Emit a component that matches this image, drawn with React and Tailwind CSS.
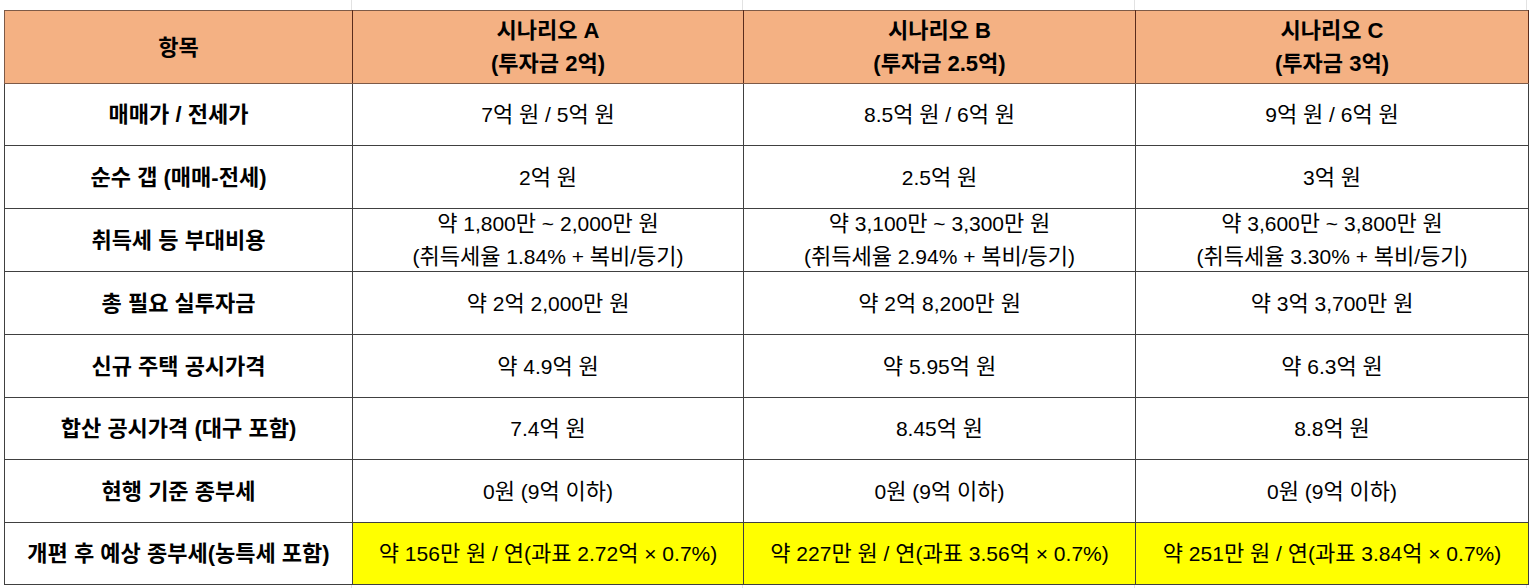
const rows = [
  { label: '매매가 / 전세가', a: ['7억 원 / 5억 원'], b: ['8.5억 원 / 6억 원'], c: ['9억 원 / 6억 원'], h: 'h-[61px]' },
  { label: '순수 갭 (매매-전세)', a: ['2억 원'], b: ['2.5억 원'], c: ['3억 원'], h: 'h-[62px]' },
  {
    label: '취득세 등 부대비용',
    a: ['약 1,800만 ~ 2,000만 원', '(취득세율 1.84% + 복비/등기)'],
    b: ['약 3,100만 ~ 3,300만 원', '(취득세율 2.94% + 복비/등기)'],
    c: ['약 3,600만 ~ 3,800만 원', '(취득세율 3.30% + 복비/등기)'],
    h: 'h-[62px]',
  },
  { label: '총 필요 실투자금', a: ['약 2억 2,000만 원'], b: ['약 2억 8,200만 원'], c: ['약 3억 3,700만 원'], h: 'h-[62px]' },
  { label: '신규 주택 공시가격', a: ['약 4.9억 원'], b: ['약 5.95억 원'], c: ['약 6.3억 원'], h: 'h-[62px]' },
  { label: '합산 공시가격 (대구 포함)', a: ['7.4억 원'], b: ['8.45억 원'], c: ['8.8억 원'], h: 'h-[61px]' },
  { label: '현행 기준 종부세', a: ['0원 (9억 이하)'], b: ['0원 (9억 이하)'], c: ['0원 (9억 이하)'], h: 'h-[62px]' },
  {
    label: '개편 후 예상 종부세(농특세 포함)',
    a: ['약 156만 원 / 연(과표 2.72억 × 0.7%)'],
    b: ['약 227만 원 / 연(과표 3.56억 × 0.7%)'],
    c: ['약 251만 원 / 연(과표 3.84억 × 0.7%)'],
    h: 'h-[61px]',
    highlight: true,
  },
];

const headers = [
  ['시나리오 A', '(투자금 2억)'],
  ['시나리오 B', '(투자금 2.5억)'],
  ['시나리오 C', '(투자금 3억)'],
];

// Hangul runs get their own size so Korean and Latin widths match the sheet
function Mixed({ text }) {
  return text.split(/([\uAC00-\uD7A3]+)/).map((part, i) =>
    /[\uAC00-\uD7A3]/.test(part) ? (
      <span key={i} className="text-[22px]">{part}</span>
    ) : (
      <span key={i}>{part}</span>
    )
  );
}

function Cell({ lines, h, bold }) {
  return (
    <div
      className={`${h} flex flex-col items-center justify-center whitespace-nowrap ${
        bold ? 'font-bold text-[22px]' : 'font-normal text-[21px]'
      }`}
    >
      {lines.map((l, i) => (
        <div key={i} className="h-[33px] leading-[33px] shrink-0">
          <Mixed text={l} />
        </div>
      ))}
    </div>
  );
}

export default function App() {
  return (
    <div
      className="bg-white w-[1530px] h-[588px] overflow-hidden text-black"
      style={{ fontFamily: '"Liberation Sans", "Noto Sans CJK KR", sans-serif' }}
    >
      {/* faint sheet gridlines above the table */}
      <div className="flex h-[10px] pl-[4px]">
        <div className="w-[348px] border-r border-[#e2e2e2]" />
        <div className="w-[391px] border-r border-[#e2e2e2]" />
        <div className="w-[392px] border-r border-[#e2e2e2]" />
        <div className="w-[392px] border-r border-[#e2e2e2]" />
      </div>
      <div className="pl-[4px]">
        <table className="border-collapse table-fixed w-[1524px]">
          <colgroup>
            <col className="w-[348px]" />
            <col className="w-[391px]" />
            <col className="w-[392px]" />
            <col className="w-[393px]" />
          </colgroup>
          <thead>
            <tr className="bg-[#f4b183]">
              <th className="border border-[#7d5a47] border-r-[#5a2c1c] p-0">
                <Cell lines={['항목']} h="h-[72px]" bold />
              </th>
              {headers.map((h, i) => (
                <th key={i} className="border border-[#7d5a47] border-r-[#5a2c1c] p-0">
                  <Cell lines={h} h="h-[72px]" bold />
                </th>
              ))}
            </tr>
          </thead>
          <tbody>
            {rows.map((r, i) => (
              <tr key={i}>
                <td className="border border-[#404040] p-0">
                  <Cell lines={[r.label]} h={r.h} bold />
                </td>
                {[r.a, r.b, r.c].map((v, j) => (
                  <td
                    key={j}
                    className={`border border-[#404040] p-0 ${r.highlight ? 'bg-[#ffff00]' : ''}`}
                  >
                    <Cell lines={v} h={r.h} />
                  </td>
                ))}
              </tr>
            ))}
          </tbody>
        </table>
      </div>
      {/* faint sheet gridline below the table */}
      <div className="flex h-[4px] pl-[4px]">
        <div className="w-[348px] border-r border-[#e2e2e2]" />
        <div className="w-[391px] border-r border-[#e2e2e2]" />
        <div className="w-[392px] border-r border-[#e2e2e2]" />
        <div className="w-[392px] border-r border-[#e2e2e2]" />
      </div>
    </div>
  );
}
